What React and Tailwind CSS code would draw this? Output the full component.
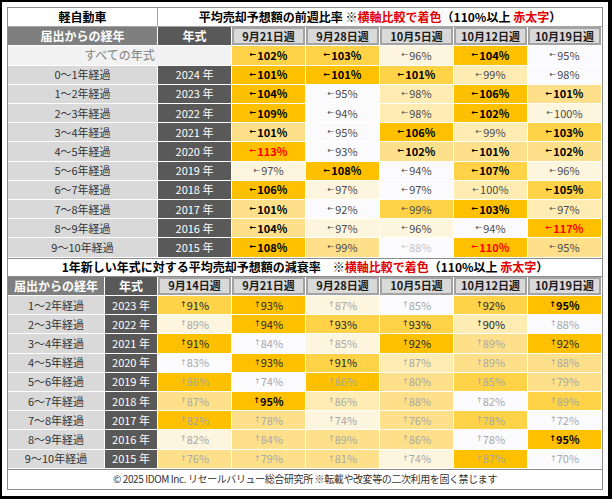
const bg = {
  0: 'bg-[#fbfbfd]',
  1: 'bg-[#fdf5de]',
  2: 'bg-[#ffecb3]',
  3: 'bg-[#ffe08a]',
  4: 'bg-[#ffd247]',
  5: 'bg-[#ffc000]',
};

const weekA = ['9月21日週', '9月28日週', '10月5日週', '10月12日週', '10月19日週'];
const weekB = ['9月14日週', '9月21日週', '9月28日週', '10月5日週', '10月12日週', '10月19日週'];

const allRow = [[102, 4], [103, 4], [96, 1], [104, 5], [95, 0]];

const wowRows = [
  { age: '0～1年経過', year: 2024, cells: [[101, 5], [101, 5], [101, 4], [99, 2], [98, 0]] },
  { age: '1～2年経過', year: 2023, cells: [[104, 5], [95, 0], [98, 2], [106, 5], [101, 3]] },
  { age: '2～3年経過', year: 2022, cells: [[109, 5], [94, 0], [98, 2], [102, 5], [100, 1]] },
  { age: '3～4年経過', year: 2021, cells: [[101, 3], [95, 0], [106, 5], [99, 2], [103, 4]] },
  { age: '4～5年経過', year: 2020, cells: [[113, 5], [93, 0], [102, 3], [101, 3], [102, 3]] },
  { age: '5～6年経過', year: 2019, cells: [[97, 1], [108, 5], [94, 0], [107, 4], [96, 1]] },
  { age: '6～7年経過', year: 2018, cells: [[106, 5], [97, 1], [97, 0], [100, 2], [105, 4]] },
  { age: '7～8年経過', year: 2017, cells: [[101, 3], [92, 0], [99, 4], [103, 5], [97, 2]] },
  { age: '8～9年経過', year: 2016, cells: [[104, 3], [97, 1], [96, 1], [94, 0], [117, 5]] },
  { age: '9～10年経過', year: 2015, cells: [[108, 5], [99, 3], [88, 0], [110, 5], [95, 3]] },
];

const decRows = [
  { age: '1～2年経過', year: 2023, cells: [[91, 4], [93, 5], [87, 1], [85, 0], [92, 4], [95, 5]] },
  { age: '2～3年経過', year: 2022, cells: [[89, 1], [94, 5], [93, 4], [93, 4], [90, 2], [88, 0]] },
  { age: '3～4年経過', year: 2021, cells: [[91, 5], [84, 0], [85, 1], [92, 5], [89, 3], [92, 5]] },
  { age: '4～5年経過', year: 2020, cells: [[83, 0], [93, 5], [91, 4], [87, 2], [89, 3], [88, 3]] },
  { age: '5～6年経過', year: 2019, cells: [[86, 5], [74, 0], [86, 5], [80, 3], [85, 4], [79, 3]] },
  { age: '6～7年経過', year: 2018, cells: [[87, 3], [95, 5], [86, 2], [88, 3], [82, 0], [89, 4]] },
  { age: '7～8年経過', year: 2017, cells: [[82, 5], [78, 3], [74, 1], [76, 3], [78, 4], [72, 0]] },
  { age: '8～9年経過', year: 2016, cells: [[82, 1], [84, 3], [89, 3], [86, 3], [78, 0], [95, 5]] },
  { age: '9～10年経過', year: 2015, cells: [[76, 3], [79, 3], [81, 3], [74, 1], [87, 5], [70, 0]] },
];

function wowText(v) {
  if (v >= 110) return 'text-[#ff0000] font-bold';
  if (v > 100) return 'text-black font-bold';
  if (v < 90) return 'text-[#c4c4c4]';
  return 'text-[#4a4a4a]';
}

function decText(v) {
  if (v >= 95) return 'text-black font-bold';
  if (v >= 90) return 'text-[#262626]';
  return 'text-[#a8a8a8]';
}

const Cell = ({ className = '', children }) => (
  <div className={`flex items-center justify-center border-r border-b border-white ${className}`}>
    {children}
  </div>
);

const DateHead = ({ children }) => (
  <div className="border-r border-b border-white bg-white">
    <div className="h-full flex items-center justify-center bg-[#d9d9d9] border-2 border-[#a3a3a3] text-[11px] font-bold text-[#1a1a1a]">
      {children}
    </div>
  </div>
);

const Title = ({ children }) => (
  <span>
    {children[0]}
    <span className="text-[#e00000]">横軸比較で着色</span>（110%以上 <span className="text-[#e00000]">赤太字</span>）
  </span>
);

const RowLabels = ({ age, year }) => (
  <>
    <Cell className="bg-[#d9d9d9] text-[11px] text-[#333]">{age}</Cell>
    <Cell className="bg-[#595959] text-[11px] text-white">{year} 年</Cell>
  </>
);

export default function App() {
  return (
    <div className="w-[612px] h-[499px] bg-white border-t-2 border-l-2 border-r-4 border-b-[3px] border-black pl-[5px] pt-[5px] font-['Noto_Sans_CJK_JP','Noto_Sans',sans-serif] leading-none">
      <div className="w-[596px] h-[483px] flex flex-col border border-[#8c8c8c]">
        {/* 前週比率 */}
        <div className="flex-[13] min-h-0 grid grid-cols-[150px_74px_repeat(5,minmax(0,1fr))] grid-rows-13">
          <div className="flex items-center justify-center border-r border-b border-[#a6a6a6] text-[12px] font-bold">軽自動車</div>
          <div className="col-span-6 flex items-center justify-center border-b border-[#a6a6a6] text-[12px] font-bold">
            <Title>{['平均売却予想額の前週比率 ※']}</Title>
          </div>

          <Cell className="bg-[#7f7f7f] text-[12px] font-bold text-white">届出からの経年</Cell>
          <Cell className="bg-[#595959] text-[12px] font-bold text-white">年式</Cell>
          {weekA.map(w => <DateHead key={w}>{w}</DateHead>)}

          <Cell className="col-span-2 bg-[#f2f2f2] text-[12px] text-[#808080]">すべての年式</Cell>
          {allRow.map(([v, l], i) => (
            <Cell key={i} className={`${bg[l]} text-[11px] ${wowText(v)}`}>
              <span className="font-['DejaVu_Sans'] text-[8px] mr-px">←</span>{v}%
            </Cell>
          ))}

          {wowRows.map(r => (
            <div key={r.age} className="contents">
              <RowLabels age={r.age} year={r.year} />
              {r.cells.map(([v, l], i) => (
                <Cell key={i} className={`${bg[l]} text-[11px] ${wowText(v)}`}>
                  <span className="font-['DejaVu_Sans'] text-[8px] mr-px">←</span>{v}%
                </Cell>
              ))}
            </div>
          ))}
        </div>

        {/* 減衰率 */}
        <div className="flex-[11] min-h-0 grid grid-cols-[97px_53px_repeat(6,minmax(0,1fr))] grid-rows-11">
          <div className="col-span-8 flex items-center justify-center border-b border-t border-[#8c8c8c] text-[12px] font-bold">
            <Title>{['1年新しい年式に対する平均売却予想額の減衰率　※']}</Title>
          </div>

          <Cell className="bg-[#7f7f7f] text-[12px] font-bold text-white">届出からの経年</Cell>
          <Cell className="bg-[#595959] text-[12px] font-bold text-white">年式</Cell>
          {weekB.map(w => <DateHead key={w}>{w}</DateHead>)}

          {decRows.map(r => (
            <div key={r.age} className="contents">
              <RowLabels age={r.age} year={r.year} />
              {r.cells.map(([v, l], i) => (
                <Cell key={i} className={`${bg[l]} text-[11px] ${decText(v)}`}>
                  <span className="font-['DejaVu_Sans'] text-[8px]">↑</span>{v}%
                </Cell>
              ))}
            </div>
          ))}
        </div>

        <div className="flex-1 min-h-0 flex items-center justify-center border-t border-[#8c8c8c] text-[10px] tracking-[-0.04em] text-[#333]">
          © 2025 IDOM Inc. リセールバリュー総合研究所 ※転載や改変等の二次利用を固く禁じます
        </div>
      </div>
    </div>
  );
}
